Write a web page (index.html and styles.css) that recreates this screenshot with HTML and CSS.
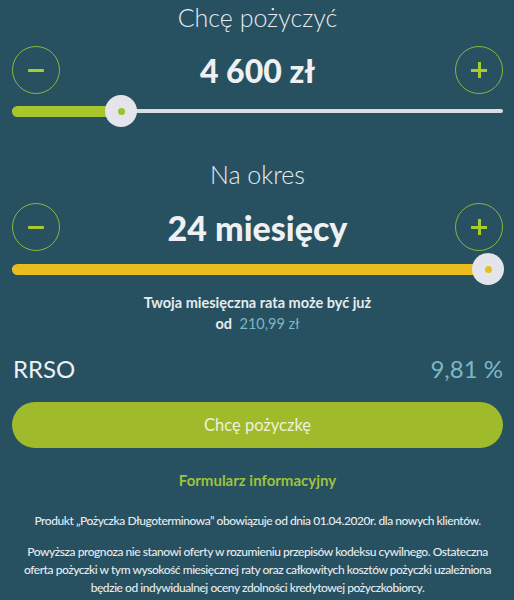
FILE: index.html
```html
<!DOCTYPE html>
<html lang="pl">
<head>
<meta charset="utf-8">
<title>Kalkulator pożyczki</title>
<link rel="stylesheet" href="styles.css">
</head>
<body>
<main class="calc">
  <section class="group">
    <h2 class="label">Chcę pożyczyć</h2>
    <div class="control">
      <button class="round" aria-label="mniej"><span class="minus"></span></button>
      <div class="value value-amount">4 600 zł</div>
      <button class="round" aria-label="więcej"><span class="plus"></span></button>
    </div>
    <div class="slider">
      <div class="rail"></div>
      <div class="fill fill-green" style="width:109px"></div>
      <div class="thumb" style="left:93px"><span class="dot dot-green"></span></div>
    </div>
  </section>

  <section class="group group-second">
    <h2 class="label">Na okres</h2>
    <div class="control">
      <button class="round" aria-label="mniej"><span class="minus"></span></button>
      <div class="value value-period">24 miesięcy</div>
      <button class="round" aria-label="więcej"><span class="plus"></span></button>
    </div>
    <div class="slider">
      <div class="rail"></div>
      <div class="fill fill-yellow" style="width:476px"></div>
      <div class="thumb" style="left:460px"><span class="dot dot-yellow"></span></div>
    </div>
  </section>

  <p class="rate">Twoja miesięczna rata może być już<br><b>od</b> <span class="rate-value">210,99 zł</span></p>

  <div class="rrso">
    <span class="rrso-label">RRSO</span>
    <span class="rrso-value">9,81 %</span>
  </div>

  <button class="cta">Chcę pożyczkę</button>

  <a class="form-link" href="#">Formularz informacyjny</a>

  <p class="note">Produkt „Pożyczka Długoterminowa” obowiązuje od dnia 01.04.2020r. dla nowych klientów.</p>
  <p class="note note-second">Powyższa prognoza nie stanowi oferty w rozumieniu przepisów kodeksu cywilnego. Ostateczna oferta pożyczki w tym wysokość miesięcznej raty oraz całkowitych kosztów pożyczki uzależniona będzie od indywidualnej oceny zdolności kredytowej pożyczkobiorcy.</p>
</main>
</body>
</html>
```

FILE: styles.css
```css
* { box-sizing: border-box; }

html, body {
  margin: 0;
  padding: 0;
  background: #275061;
}

body {
  font-family: Lato, "Open Sans", sans-serif;
  color: #e8ecee;
  width: 514px;
  height: 600px;
  overflow: hidden;
}

.calc {
  padding: 0 11px 0 12px;
  display: flex;
  flex-direction: column;
}

.group { display: flex; flex-direction: column; }
.group-second { margin-top: 30px; }

.label {
  margin: 0;
  font-weight: 300;
  font-size: 25px;
  line-height: 34px;
  text-align: center;
  color: #e6ebee;
}

.control {
  margin-top: 12px;
  display: grid;
  grid-template-columns: 48px 1fr 48px;
  align-items: center;
  height: 48px;
}

.round {
  width: 48px;
  height: 48px;
  border-radius: 50%;
  border: 1.5px solid #86b83a;
  background: transparent;
  padding: 0;
  display: flex;
  align-items: center;
  justify-content: center;
  cursor: pointer;
}

.minus {
  display: block;
  width: 16px;
  height: 3px;
  background: #a9cc2a;
  border-radius: 1px;
}

.plus {
  display: block;
  width: 16px;
  height: 16px;
  background:
    linear-gradient(#a9cc2a, #a9cc2a) center / 16px 3px no-repeat,
    linear-gradient(#a9cc2a, #a9cc2a) center / 3px 16px no-repeat;
}

.value {
  text-align: center;
  font-weight: 900;
  color: #eef0f2;
}
.value-amount { font-size: 32px; }
.value-period { font-size: 34px; }

.slider {
  position: relative;
  height: 32px;
  margin-top: 1px;
  display: flex;
  align-items: center;
}
.group-second .slider { margin-top: 2px; }

.rail {
  width: 100%;
  height: 4px;
  border-radius: 2px;
  background: #d9dde0;
}

.fill {
  position: absolute;
  left: 0;
  top: 11px;
  height: 11px;
  border-radius: 6px;
}
.fill-green { background: #a6c62c; }
.fill-yellow { background: #e9bd1e; }

.thumb {
  position: absolute;
  top: 0;
  width: 32px;
  height: 32px;
  border-radius: 50%;
  background: #e4e5ea;
  display: flex;
  align-items: center;
  justify-content: center;
}
.dot {
  width: 7px;
  height: 7px;
  border-radius: 50%;
}
.dot-green { background: #98c22c; }
.dot-yellow { background: #e9bd1e; }

.rate {
  margin: 7px 0 0;
  text-align: center;
  font-size: 14.5px;
  line-height: 21px;
  font-weight: 700;
  color: #e6ebee;
}
.rate b { font-weight: 700; margin-right: 4px; }
.rate-value { color: #7db7c6; font-weight: 400; }

.rrso {
  margin-top: 19px;
  display: flex;
  justify-content: space-between;
  align-items: center;
  height: 30px;
  font-size: 24px;
  padding-left: 1px;
}
.rrso-label { color: #eef1f3; }
.rrso-value { color: #7db7c6; }

.cta {
  margin-top: 19px;
  height: 46px;
  width: 100%;
  border: 0;
  border-radius: 23px;
  background: #9fbb2b;
  color: #eef1dc;
  font-family: Lato, "Open Sans", sans-serif;
  font-size: 16.5px;
  cursor: pointer;
}

.form-link {
  margin-top: 22px;
  text-align: center;
  font-size: 15px;
  line-height: 20px;
  font-weight: 700;
  color: #9ec33b;
  text-decoration: none;
}

.note {
  margin: 22px 0 0;
  text-align: center;
  font-size: 12px;
  line-height: 18px;
  letter-spacing: -0.45px;
  color: #e6ebee;
  font-weight: 500;
  padding: 0;
}
.note-second { margin-top: 13px; }
```
